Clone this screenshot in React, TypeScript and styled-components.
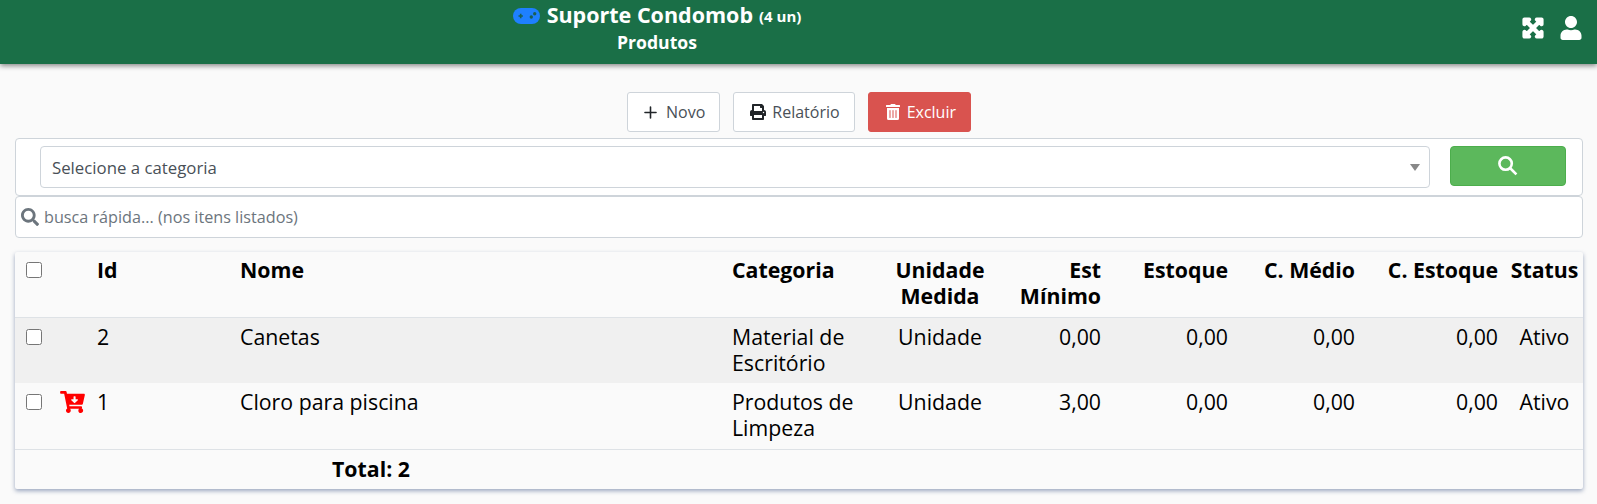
import styled, { createGlobalStyle } from "styled-components";
import { FaCartArrowDown, FaPrint, FaSearch, FaTrashAlt, FaUser, FaExpandArrowsAlt } from "react-icons/fa";
import { Plus } from "lucide-react";

const GlobalStyle = createGlobalStyle`
  * {
    box-sizing: border-box;
  }
  html, body {
    margin: 0;
    padding: 0;
    background: #fafafa;
    font-family: "Open Sans", "Liberation Sans", sans-serif;
  }
`;

const Rows = [
  { id: 2, nome: "Canetas", categoria: ["Material de", "Escritório"], minimo: "0,00", noCart: false },
  { id: 1, nome: "Cloro para piscina", categoria: ["Produtos de", "Limpeza"], minimo: "3,00", noCart: true },
];

const GamepadIcon = () => (
  <GameSvg viewBox="0 0 27 16">
    <rect width="27" height="16" rx="8" fill="#1e80ff" />
    <path d="M5.5 8h4.4M7.7 5.8v4.4" stroke="#1a5f55" strokeWidth="1.6" />
    <circle cx="21.7" cy="5.7" r="1.7" fill="#1a5f55" />
    <circle cx="18.3" cy="9" r="1.7" fill="#1a5f55" />
  </GameSvg>
);

const ThinSearchIcon = () => (
  <svg width="20" height="20" viewBox="0 0 20 20" fill="none" stroke="currentColor" strokeWidth="2.6">
    <circle cx="7.6" cy="7.6" r="6.2" />
    <path d="M12 12l6.4 6.4" />
  </svg>
);

const App = () => {
  return (
    <>
      <GlobalStyle />
      <Header>
        <HeaderTitle>
          <TitleLine>
            <GamepadIcon />
            Suporte Condomob<small>(4 un)</small>
          </TitleLine>
          <SubTitle>Produtos</SubTitle>
        </HeaderTitle>
        <HeaderIcons>
          <ExpandIcon />
          <FaUser />
        </HeaderIcons>
      </Header>
      <Main>
        <Toolbar>
          <Button>
            <PlusIcon size={19} strokeWidth={2} />
            Novo
          </Button>
          <Button>
            <FaPrint size={16} />
            Relatório
          </Button>
          <Button $danger>
            <FaTrashAlt size={16} />
            Excluir
          </Button>
        </Toolbar>
        <FilterCard>
          <Select>
            Selecione a categoria
            <Caret />
          </Select>
          <SearchButton>
            <ThinSearchIcon />
          </SearchButton>
        </FilterCard>
        <QuickSearch>
          <FaSearch size={18} />
          busca rápida... (nos itens listados)
        </QuickSearch>
        <Card>
          <Table>
            <colgroup>
              <col width={35} />
              <col width={39} />
              <col width={143} />
              <col width={492} />
              <col width={162} />
              <col width={108} />
              <col width={115} />
              <col width={127} />
              <col width={127} />
              <col width={143} />
              <col width={77} />
            </colgroup>
            <thead>
              <tr>
                <Th><Check /></Th>
                <Th />
                <Th>Id</Th>
                <Th>Nome</Th>
                <Th>Categoria</Th>
                <Th $align="center">Unidade Medida</Th>
                <Th $align="right">Est Mínimo</Th>
                <Th $align="right">Estoque</Th>
                <Th $align="right">C. Médio</Th>
                <Th $align="right">C. Estoque</Th>
                <Th $align="center">Status</Th>
              </tr>
            </thead>
            <tbody>
              {Rows.map((el, idx) => (
                <Row key={el.id} $striped={idx === 0}>
                  <Td><Check /></Td>
                  <Td>{el.noCart && <CartIcon />}</Td>
                  <Td>{el.id}</Td>
                  <Td>{el.nome}</Td>
                  <Td>{el.categoria[0]}<br />{el.categoria[1]}</Td>
                  <Td $align="center">Unidade</Td>
                  <Td $align="right">{el.minimo}</Td>
                  <Td $align="right">0,00</Td>
                  <Td $align="right">0,00</Td>
                  <Td $align="right">0,00</Td>
                  <Td $align="center">Ativo</Td>
                </Row>
              ))}
              <FooterRow>
                <td colSpan={3} />
                <FooterCell colSpan={8}>Total: 2</FooterCell>
              </FooterRow>
            </tbody>
          </Table>
        </Card>
      </Main>
    </>
  );
};

export default App;

const Header = styled.header`
  height: 64px;
  padding-right: 283px;
  background: #1a6f47;
  box-shadow: 0 2px 5px rgba(0, 0, 0, 0.45);
  display: flex;
  justify-content: center;
  color: #fff;
  position: relative;
`;

const HeaderTitle = styled.div`
  text-align: center;
  font-weight: 700;
`;

const TitleLine = styled.div`
  display: flex;
  align-items: center;
  justify-content: center;
  gap: 7px;
  margin-top: -2px;
  font-size: 21.5px;
  line-height: 30px;
  white-space: pre;
  small {
    font-size: 15px;
    margin-top: 3px;
    margin-left: -1px;
  }
`;

const GameSvg = styled.svg`
  width: 27px;
  height: 16px;
  margin-top: 3px;
`;

const SubTitle = styled.div`
  font-size: 17.6px;
  line-height: 24px;
  margin-top: -1px;
`;

const HeaderIcons = styled.div`
  position: absolute;
  right: 15px;
  top: 16px;
  display: flex;
  align-items: center;
  gap: 16px;
  svg {
    width: 22px;
    height: 24px;
  }
`;

const ExpandIcon = styled(FaExpandArrowsAlt)`
  && {
    width: 22px;
    height: 22px;
  }
  overflow: visible;
  stroke: #fff;
  stroke-width: 45px;
`;

const Main = styled.main`
  min-height: 440px;
  padding: 28px 14px 0 15px;
  display: flex;
  flex-direction: column;
`;

const Toolbar = styled.div`
  display: flex;
  gap: 13px;
  margin-left: 612px;
  margin-bottom: 6px;
`;

const Button = styled.button<{ $danger?: boolean }>`
  height: 40px;
  padding: 0 14px 0 16px;
  display: flex;
  align-items: center;
  gap: 6px;
  border-radius: 3px;
  border: 1px solid ${(p) => (p.$danger ? "#d9534f" : "#ced4da")};
  background: ${(p) => (p.$danger ? "#d9534f" : "#fff")};
  color: ${(p) => (p.$danger ? "#fff" : "#495057")};
  font-family: inherit;
  font-size: 16px;
  svg {
    color: ${(p) => (p.$danger ? "#fff" : "#212529")};
  }
`;

const PlusIcon = styled(Plus)`
  margin: 0 0 0 -3px;
`;

const FilterCard = styled.div`
  height: 58px;
  background: #fff;
  border: 1px solid #ced4da;
  border-radius: 4px;
  padding: 7px 16px 0 24px;
  display: flex;
  gap: 20px;
`;

const Select = styled.div`
  flex: 1;
  height: 42px;
  border: 1px solid #ced4da;
  border-radius: 4px;
  padding: 1px 9px 0 11px;
  display: flex;
  align-items: center;
  justify-content: space-between;
  font-size: 16.8px;
  color: #495057;
`;

const Caret = styled.span`
  width: 0;
  height: 0;
  border-left: 5px solid transparent;
  border-right: 5px solid transparent;
  border-top: 7px solid #888;
`;

const SearchButton = styled.button`
  width: 116px;
  height: 40px;
  border: 1px solid #4cae4c;
  border-radius: 4px;
  background: #5cb85c;
  color: #fff;
  display: flex;
  align-items: center;
  justify-content: center;
`;

const QuickSearch = styled.div`
  height: 42px;
  background: #fff;
  border: 1px solid #ced4da;
  border-radius: 4px;
  padding: 0 5px;
  display: flex;
  align-items: center;
  gap: 5px;
  font-size: 16.2px;
  color: #6c757d;
  svg {
    color: #6c757d;
  }
`;

const Card = styled.div`
  margin-top: 14px;
  background: #fafafa;
  box-shadow: 0 2px 4px rgba(90, 110, 150, 0.6);
  border-radius: 2px;
`;

const Table = styled.table`
  width: 1568px;
  table-layout: fixed;
  border-collapse: collapse;
  color: #000;
  font-size: 21.3px;
  line-height: 26px;
`;

const Th = styled.th<{ $align?: string }>`
  height: 65px;
  padding: 5px ${(p) => (p.$align === "center" ? "2px" : "8px")} 0;
  vertical-align: top;
  font-weight: 700;
  text-align: ${(p) => p.$align ?? "left"};
  border-bottom: 1px solid #dee2e6;
`;

const Row = styled.tr<{ $striped: boolean }>`
  height: 66px;
  background: ${(p) => (p.$striped ? "#f0f0f0" : "transparent")};
  border-bottom: ${(p) => (p.$striped ? "none" : "1px solid #dee2e6")};
`;

const Td = styled.td<{ $align?: string }>`
  padding: 6px 8px 0;
  vertical-align: top;
  font-weight: 400;
  text-align: ${(p) => p.$align ?? "left"};
`;

const FooterRow = styled.tr`
  height: 40px;
`;

const FooterCell = styled.td`
  padding: 0 8px 0 100px;
  font-weight: 700;
`;

const Check = styled.input.attrs({ type: "checkbox" })`
  width: 16px;
  height: 16px;
  margin: 4px 0 0 3px;
`;

const CartIcon = styled(FaCartArrowDown)`
  width: 25px;
  height: 22px;
  color: #f00;
  margin: 2px 0 0 2px;
  display: block;
`;
